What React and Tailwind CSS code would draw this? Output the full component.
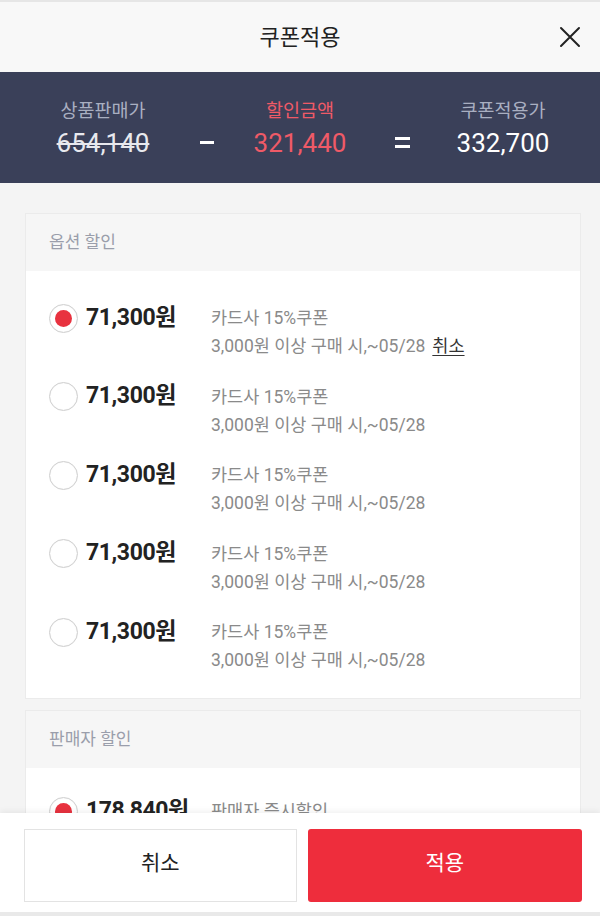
import React from 'react'

const FONT = { fontFamily: 'Roboto, "Noto Sans CJK KR", sans-serif' }

const coupons = [
  { amount: '71,300원', title: '카드사 15%쿠폰', cond: '3,000원 이상 구매 시,~05/28', selected: true },
  { amount: '71,300원', title: '카드사 15%쿠폰', cond: '3,000원 이상 구매 시,~05/28' },
  { amount: '71,300원', title: '카드사 15%쿠폰', cond: '3,000원 이상 구매 시,~05/28' },
  { amount: '71,300원', title: '카드사 15%쿠폰', cond: '3,000원 이상 구매 시,~05/28' },
  { amount: '71,300원', title: '카드사 15%쿠폰', cond: '3,000원 이상 구매 시,~05/28' },
]

function Radio({ checked }) {
  return (
    <span className="w-[29px] h-[29px] rounded-full border border-[#cfcfcf] bg-white flex items-center justify-center flex-shrink-0 shadow-[inset_0_0_1px_rgba(0,0,0,0.15)]">
      {checked && <span className="w-[17px] h-[17px] rounded-full bg-[#e8323f]" />}
    </span>
  )
}

function CouponRow({ c }) {
  return (
    <div className="flex items-start h-[56px]">
      <div className="flex items-center h-[28px] pl-[23px] w-[185px]">
        <Radio checked={c.selected} />
        <span className="ml-[8px] text-[23px] font-bold text-[#222] tracking-[-0.4px]">{c.amount}</span>
      </div>
      <div className="text-[17.5px] leading-[28px] text-[#8a8a8a]">
        <div>{c.title}</div>
        <div>
          {c.cond}
          {c.selected && <span className="ml-[7px] text-[#333] underline underline-offset-[3px]">취소</span>}
        </div>
      </div>
    </div>
  )
}

export default function App() {
  return (
    <div className="w-[600px] h-[916px] flex flex-col overflow-hidden bg-[#f4f4f4]" style={FONT}>
      {/* Header */}
      <div className="h-[72px] flex-shrink-0 relative flex items-center justify-center bg-[#f8f8f8] border-t-2 border-[#e6e6e6]">
        <span className="text-[22px] text-[#222]">쿠폰적용</span>
        <svg className="absolute right-[19px] top-[24px]" width="22" height="22" viewBox="0 0 22 22">
          <path d="M2 2 L20 20 M20 2 L2 20" stroke="#222" strokeWidth="2" strokeLinecap="round" />
        </svg>
      </div>

      {/* Summary band */}
      <div className="h-[111px] flex-shrink-0 bg-[#3a4059] flex items-center pl-[28px] pt-[3px]">
        <div className="w-[150px] flex flex-col items-center">
          <span className="text-[18.5px] text-[#a9afc1]">상품판매가</span>
          <span className="text-[26px] leading-[34px] text-[#e8e9ee] line-through decoration-[1.5px] mt-[1px]">654,140</span>
        </div>
        <div className="w-[58px] flex justify-center pt-[26px]">
          <span className="w-[14px] h-[3px] bg-white" />
        </div>
        <div className="w-[128px] flex flex-col items-center">
          <span className="text-[18.5px] text-[#ef5a67]">할인금액</span>
          <span className="text-[26px] leading-[34px] text-[#ef5a67] mt-[1px]">321,440</span>
        </div>
        <div className="w-[76px] flex flex-col items-center gap-[5px] pt-[26px]">
          <span className="w-[15px] h-[3px] bg-white" />
          <span className="w-[15px] h-[3px] bg-white" />
        </div>
        <div className="w-[126px] flex flex-col items-center">
          <span className="text-[18.5px] text-[#a9afc1]">쿠폰적용가</span>
          <span className="text-[26px] leading-[34px] text-white mt-[1px]">332,700</span>
        </div>
      </div>

      {/* Scroll content */}
      <div className="flex-1 overflow-hidden pt-[30px] pl-[25px] pr-[19px] flex flex-col gap-[11px]">
        <div className="bg-white border border-[#ebebeb] flex-shrink-0">
          <div className="h-[57px] bg-[#f6f6f6] flex items-center pl-[23px] text-[17px] text-[#9a9eab]">옵션 할인</div>
          <div className="pt-[33px] pb-[24px] flex flex-col gap-[22.5px]">
            {coupons.map((c, i) => <CouponRow key={i} c={c} />)}
          </div>
        </div>

        <div className="bg-white border border-[#ebebeb] flex-shrink-0">
          <div className="h-[57px] bg-[#f6f6f6] flex items-center pl-[23px] text-[17px] text-[#9a9eab]">판매자 할인</div>
          <div className="pt-[29px] pb-[26px]">
            <CouponRow c={{ amount: '178,840원', title: '판매자 즉시할인', cond: '', selected: true }} />
          </div>
        </div>
      </div>

      {/* Bottom bar */}
      <div className="h-[103px] flex-shrink-0 bg-white border-b-4 border-[#e9e9e9] shadow-[0_-2px_6px_rgba(0,0,0,0.06)] flex gap-[11px] pl-[24px] pr-[18px] pt-[16px] pb-[10px] relative">
        <button className="w-[273px] h-[73px] border border-[#e3e3e3] bg-white text-[21px] text-[#222] pb-[4px]">취소</button>
        <button className="w-[275px] h-[73px] rounded-[3px] bg-[#ee2d3c] text-[21px] text-white pb-[4px]">적용</button>
      </div>
    </div>
  )
}
